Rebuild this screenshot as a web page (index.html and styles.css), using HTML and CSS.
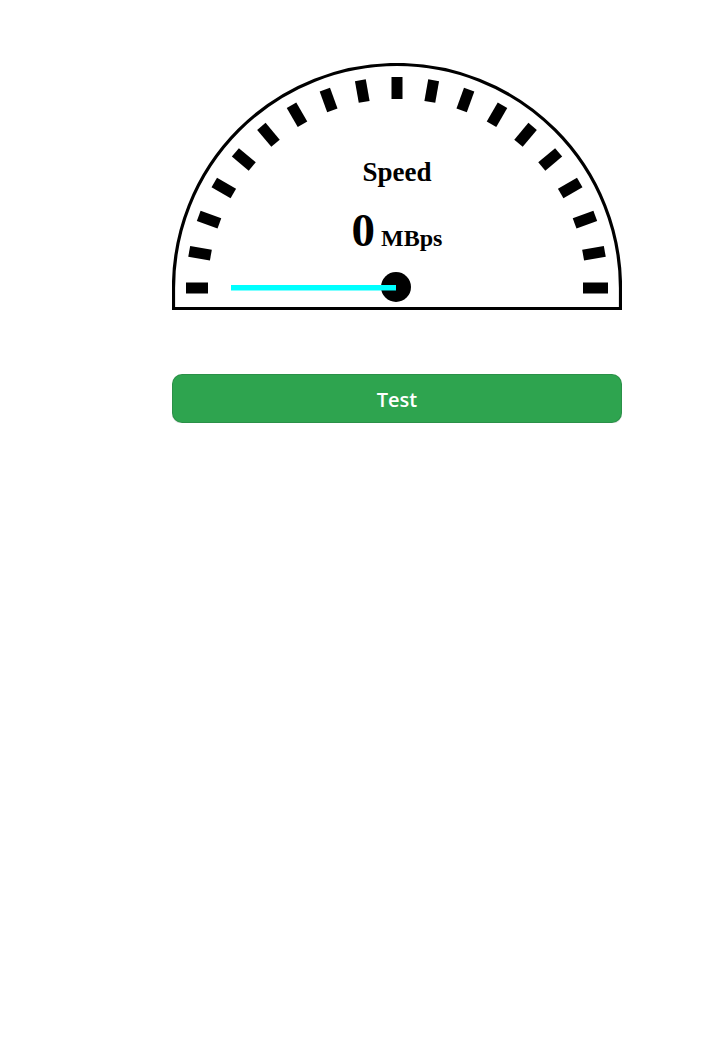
FILE: index.html
```html
<!DOCTYPE html>
<html lang="en">
<head>
<meta charset="utf-8">
<title>Speed Test</title>
<link rel="stylesheet" href="styles.css">
</head>
<body>
<main class="page">
  <div class="gauge">
    <svg class="gauge-art" width="450" height="247" viewBox="0 0 450 247" aria-hidden="true">
      <path d="M1.5 245.5 L1.5 225 A223.5 223.5 0 0 1 448.5 225 L448.5 245.5 Z" fill="none" stroke="#000" stroke-width="3.2"/>
      <g fill="#000">
        <rect x="14" y="219.5" width="22" height="11" transform="rotate(0 225 225)"/>
        <rect x="14" y="219.5" width="22" height="11" transform="rotate(10 225 225)"/>
        <rect x="14" y="219.5" width="22" height="11" transform="rotate(20 225 225)"/>
        <rect x="14" y="219.5" width="22" height="11" transform="rotate(30 225 225)"/>
        <rect x="14" y="219.5" width="22" height="11" transform="rotate(40 225 225)"/>
        <rect x="14" y="219.5" width="22" height="11" transform="rotate(50 225 225)"/>
        <rect x="14" y="219.5" width="22" height="11" transform="rotate(60 225 225)"/>
        <rect x="14" y="219.5" width="22" height="11" transform="rotate(70 225 225)"/>
        <rect x="14" y="219.5" width="22" height="11" transform="rotate(80 225 225)"/>
        <rect x="14" y="219.5" width="22" height="11" transform="rotate(90 225 225)"/>
        <rect x="14" y="219.5" width="22" height="11" transform="rotate(100 225 225)"/>
        <rect x="14" y="219.5" width="22" height="11" transform="rotate(110 225 225)"/>
        <rect x="14" y="219.5" width="22" height="11" transform="rotate(120 225 225)"/>
        <rect x="14" y="219.5" width="22" height="11" transform="rotate(130 225 225)"/>
        <rect x="14" y="219.5" width="22" height="11" transform="rotate(140 225 225)"/>
        <rect x="14" y="219.5" width="22" height="11" transform="rotate(150 225 225)"/>
        <rect x="14" y="219.5" width="22" height="11" transform="rotate(160 225 225)"/>
        <rect x="14" y="219.5" width="22" height="11" transform="rotate(170 225 225)"/>
        <rect x="14" y="219.5" width="25" height="11" transform="rotate(180 225 225)"/>
      </g>
      <circle cx="224" cy="224" r="15" fill="#000"/>
      <line x1="59" y1="224.7" x2="224" y2="224.7" stroke="#00ffff" stroke-width="5.5"/>
    </svg>
    <div class="label">Speed</div>
    <div class="value"><span class="num">0</span><span class="unit"> MBps</span></div>
  </div>
  <button class="test-btn" type="button">Test</button>
</main>
</body>
</html>
```

FILE: styles.css
```css
html, body {
  margin: 0;
  padding: 0;
  background: #ffffff;
}

.page {
  display: flex;
  flex-direction: column;
  align-items: flex-start;
  padding: 63px 0 0 172px;
}

.gauge {
  position: relative;
  width: 450px;
  height: 247px;
  padding-top: 94px;
  box-sizing: border-box;
  display: flex;
  flex-direction: column;
  align-items: center;
  font-family: "Liberation Serif", "Times New Roman", serif;
  font-weight: bold;
  color: #000;
}

.gauge-art {
  position: absolute;
  left: 0;
  top: 0;
  display: block;
}

.label {
  position: relative;
  font-size: 27px;
  line-height: 31px;
}

.value {
  position: relative;
  margin-top: 20px;
  font-size: 47px;
  line-height: 45px;
  white-space: nowrap;
}

.num {
  font-size: 47px;
}

.unit {
  font-size: 24px;
  line-height: 22px;
}

.test-btn {
  margin-top: 64px;
  width: 450px;
  height: 49px;
  display: flex;
  align-items: center;
  justify-content: center;
  background: #2ea44f;
  color: #ffffff;
  border: 1px solid rgba(27, 31, 35, 0.15);
  border-radius: 10px;
  box-shadow: 0 1px 0 rgba(27, 31, 35, 0.1);
  font-family: "Open Sans", "Noto Sans", sans-serif;
  font-weight: 600;
  font-size: 20px;
  padding: 2px 0 0;
  cursor: pointer;
}
```
